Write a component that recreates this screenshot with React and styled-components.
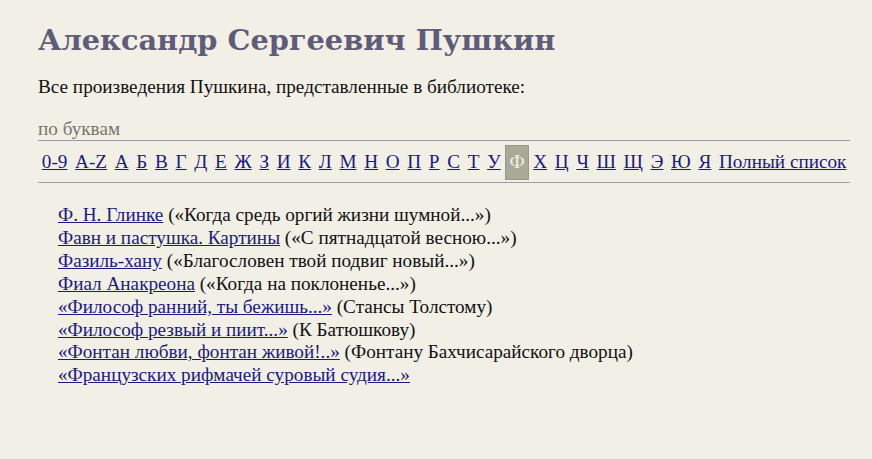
import React from "react";
import styled, { createGlobalStyle } from "styled-components";

const GlobalStyle = createGlobalStyle`
  body {
    margin: 0;
    background: #f2efe7;
    font-family: "Liberation Serif", "Times New Roman", serif;
    color: #111;
  }
`;

const letters = [
  "0-9", "A-Z", "А", "Б", "В", "Г", "Д", "Е", "Ж", "З", "И", "К", "Л", "М",
  "Н", "О", "П", "Р", "С", "Т", "У", "Ф", "Х", "Ц", "Ч", "Ш", "Щ", "Э", "Ю", "Я",
];

const works = [
  { title: "Ф. Н. Глинке", note: "(«Когда средь оргий жизни шумной...»)" },
  { title: "Фавн и пастушка. Картины", note: "(«С пятнадцатой весною...»)" },
  { title: "Фазиль-хану", note: "(«Благословен твой подвиг новый...»)" },
  { title: "Фиал Анакреона", note: "(«Когда на поклоненье...»)" },
  { title: "«Философ ранний, ты бежишь...»", note: "(Стансы Толстому)" },
  { title: "«Философ резвый и пиит...»", note: "(К Батюшкову)" },
  { title: "«Фонтан любви, фонтан живой!..»", note: "(Фонтану Бахчисарайского дворца)" },
  { title: "«Французских рифмачей суровый судия...»", note: "" },
];

const Page = styled.div`
  padding: 20px 22px 40px 38px;
  font-size: 19.2px;
`;

const Title = styled.h1`
  margin: 0;
  font-family: "DejaVu Serif", serif;
  font-weight: bold;
  font-size: 28.8px;
  line-height: 40px;
  color: #5f5c78;
`;

const Intro = styled.p`
  margin: 15px 0 0;
  line-height: 24px;
`;

const Caption = styled.div`
  margin-top: 19px;
  line-height: 22px;
  color: #77776a;
`;

const LetterBar = styled.nav`
  display: flex;
  flex-wrap: nowrap;
  align-items: center;
  white-space: nowrap;
  border-top: 1px solid #9a9aae;
  border-bottom: 1px solid #9a9aae;
  padding: 4px 0 2px;
`;

const Letter = styled.a`
  display: inline-block;
  padding: 5px 3.85px 6px;
  line-height: 22px;
  color: ${(p) => (p.$active ? "#f2efe7" : "#1a1a7e")};
  background: ${(p) => (p.$active ? "#a9a997" : "transparent")};
  border: ${(p) => (p.$active ? "1px solid #999987" : "none")};
  text-decoration: ${(p) => (p.$active ? "none" : "underline")};
  cursor: pointer;
`;

const WorkList = styled.ul`
  list-style: none;
  margin: 21px 0 0;
  padding: 0 0 0 20px;
`;

const Work = styled.li`
  line-height: 22.9px;
`;

const WorkLink = styled.a`
  color: #1a1a7e;
  text-decoration: underline;
`;

export default function App() {
  return (
    <>
      <GlobalStyle />
      <Page>
        <Title>Александр Сергеевич Пушкин</Title>
        <Intro>Все произведения Пушкина, представленные в библиотеке:</Intro>
        <Caption>по буквам</Caption>
        <LetterBar>
          {letters.map((l) => (
            <Letter key={l} $active={l === "Ф"} href={l === "Ф" ? undefined : "#"}>
              {l}
            </Letter>
          ))}
          <Letter href="#">Полный список</Letter>
        </LetterBar>
        <WorkList>
          {works.map((w) => (
            <Work key={w.title}>
              <WorkLink href="#">{w.title}</WorkLink>
              {w.note && " " + w.note}
            </Work>
          ))}
        </WorkList>
      </Page>
    </>
  );
}
